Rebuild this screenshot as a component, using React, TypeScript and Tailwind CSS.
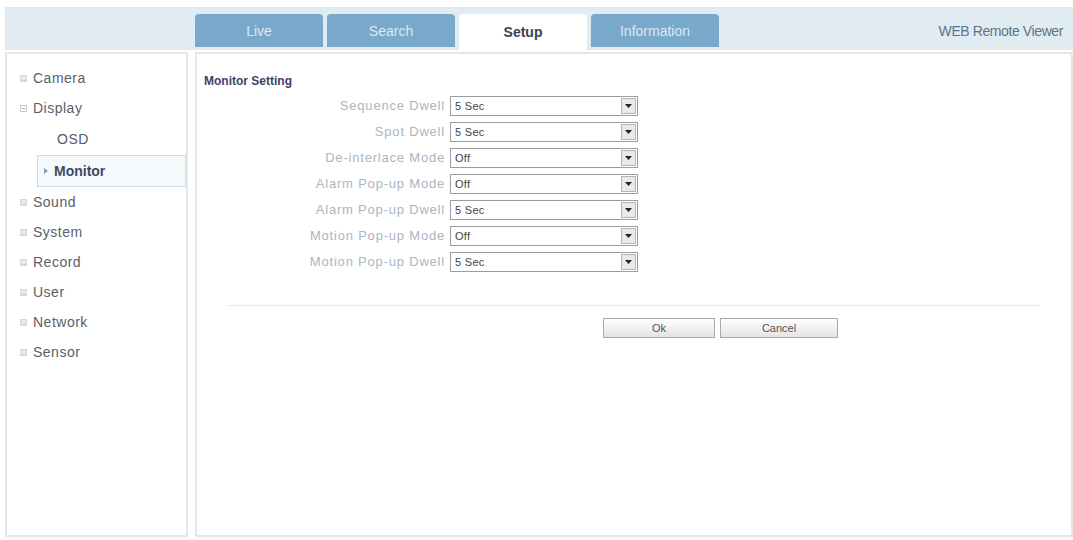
import React from "react";

const tabs = [
  { label: "Live", active: false },
  { label: "Search", active: false },
  { label: "Setup", active: true },
  { label: "Information", active: false },
];

const menu = [
  { label: "Camera", kind: "group" },
  { label: "Display", kind: "open" },
  { label: "OSD", kind: "sub" },
  { label: "Monitor", kind: "current" },
  { label: "Sound", kind: "group" },
  { label: "System", kind: "group" },
  { label: "Record", kind: "group" },
  { label: "User", kind: "group" },
  { label: "Network", kind: "group" },
  { label: "Sensor", kind: "group" },
];

const fields = [
  { label: "Sequence Dwell", value: "5 Sec" },
  { label: "Spot Dwell", value: "5 Sec" },
  { label: "De-interlace Mode", value: "Off" },
  { label: "Alarm Pop-up Mode", value: "Off" },
  { label: "Alarm Pop-up Dwell", value: "5 Sec" },
  { label: "Motion Pop-up Mode", value: "Off" },
  { label: "Motion Pop-up Dwell", value: "5 Sec" },
];

function MenuIcon({ open }: { open?: boolean }) {
  return (
    <svg width="7" height="7" viewBox="0 0 7 7" className="shrink-0">
      {open ? (
        <>
          <rect x="0.5" y="0.5" width="6" height="6" fill="none" stroke="#c2cbc6" />
          <line x1="2" y1="3.5" x2="5" y2="3.5" stroke="#aab5ae" />
        </>
      ) : (
        <>
          <rect x="0" y="0" width="7" height="7" fill="#d3dbd6" />
          <line x1="1" y1="2" x2="6" y2="2" stroke="#f4f7f5" />
          <line x1="1" y1="4" x2="6" y2="4" stroke="#f4f7f5" />
        </>
      )}
    </svg>
  );
}

function Select({ value }: { value: string }) {
  return (
    <div className="flex h-[20px] w-[188px] items-center border border-[#9d9d9d] bg-white">
      <span className="flex-1 pl-[4px] text-[11px] tracking-[0.3px] text-[#444]">{value}</span>
      <span className="mr-[1px] flex h-[16px] w-[15px] items-center justify-center border border-[#b5b5b5] bg-[#e9e9e9]">
        <svg width="7" height="4" viewBox="0 0 7 4">
          <path d="M0 0h7L3.5 4z" fill="#222" />
        </svg>
      </span>
    </div>
  );
}

export default function App() {
  return (
    <div
      className="h-[540px] w-[1073px] bg-white pt-[7px]"
      style={{ fontFamily: '"Liberation Sans", Arial, sans-serif' }}
    >
      <header className="ml-[5px] flex h-[43px] items-end bg-[#e0ebf2]">
        <nav className="ml-[190px] flex gap-[4px]">
          {tabs.map((t) => (
            <div
              key={t.label}
              className={
                t.active
                  ? "flex h-[36px] w-[128px] items-center justify-center rounded-t-[4px] bg-white pt-[1px] text-[14px] font-bold text-[#3e4152]"
                  : "mb-[3px] flex h-[33px] w-[128px] items-center justify-center self-end rounded-t-[4px] bg-[#79a9ca] pt-[2px] text-[14px] text-[#dbe8f2]"
              }
            >
              {t.label}
            </div>
          ))}
        </nav>
        <div className="mb-[8px] ml-auto mr-[10px] text-[14px] tracking-[-0.4px] text-[#5e7489]">
          WEB Remote Viewer
        </div>
      </header>

      <div className="ml-[5px] mt-[2px] flex h-[485px] gap-[7px]">
        <aside className="w-[183px] border-2 border-[#e6e6e6] pt-[9px]">
          <ul className="flex flex-col">
            {menu.map((m) => {
              if (m.kind === "sub")
                return (
                  <li key={m.label} className="flex h-[32px] items-center pl-[50px] text-[14px] tracking-[0.5px] text-[#555b66]">
                    {m.label}
                  </li>
                );
              if (m.kind === "current")
                return (
                  <li
                    key={m.label}
                    className="ml-[30px] flex h-[32px] items-center gap-[6px] border border-[#c9dde8] bg-[#f4f9fc] pl-[6px] text-[14px] font-bold text-[#3f4964]"
                  >
                    <svg width="4" height="6" viewBox="0 0 4 6">
                      <path d="M0 0l4 3-4 3z" fill="#7ea2b8" />
                    </svg>
                    {m.label}
                  </li>
                );
              return (
                <li key={m.label} className="flex h-[30px] items-center gap-[6px] pl-[13px] text-[14px] tracking-[0.5px] text-[#5a606a]">
                  <MenuIcon open={m.kind === "open"} />
                  {m.label}
                </li>
              );
            })}
          </ul>
        </aside>

        <main className="flex-1 border-2 border-[#e6e6e6] pl-[7px] pr-[31px] pt-[18px]">
          <h2 className="text-[12px] font-bold text-[#3d4266]">Monitor Setting</h2>
          <div className="mt-[6px] flex flex-col gap-[6px]">
            {fields.map((f) => (
              <div key={f.label} className="flex items-center">
                <label className="w-[246px] pr-[5px] text-right text-[13px] tracking-[0.8px] text-[#aab6c0]">
                  {f.label}
                </label>
                <Select value={f.value} />
              </div>
            ))}
          </div>
          <div className="ml-[24px] mt-[33px] border-t border-dotted border-[#d6d6d6]" />
          <div className="mt-[12px] flex gap-[5px] pl-[399px]">
            <button className="h-[20px] w-[112px] border border-[#a9a9a9] bg-gradient-to-b from-white to-[#e3e3e3] text-[11px] text-[#555]">
              Ok
            </button>
            <button className="h-[20px] w-[118px] border border-[#a9a9a9] bg-gradient-to-b from-white to-[#e3e3e3] text-[11px] text-[#555]">
              Cancel
            </button>
          </div>
        </main>
      </div>
    </div>
  );
}
